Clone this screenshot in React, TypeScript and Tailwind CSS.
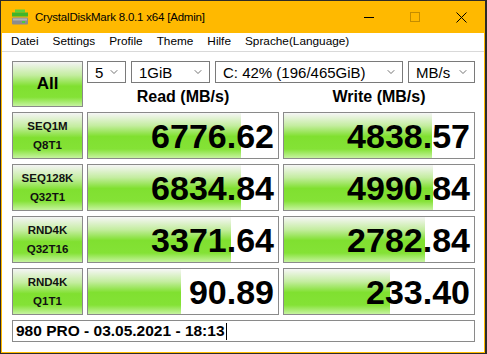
import { ChevronDown } from 'lucide-react';

const rows = [
  { a: 'SEQ1M', b: 'Q8T1', read: '6776.62', write: '4838.57', rw: 153, ww: 148 },
  { a: 'SEQ128K', b: 'Q32T1', read: '6834.84', write: '4990.84', rw: 153, ww: 149 },
  { a: 'RND4K', b: 'Q32T16', read: '3371.64', write: '2782.84', rw: 143, ww: 141 },
  { a: 'RND4K', b: 'Q1T1', read: '90.89', write: '233.40', rw: 93, ww: 106 },
];

const font = { fontFamily: '"Liberation Sans", Arial, sans-serif' };

function Select({ w, text }: { w: string; text: string }) {
  return (
    <div className={`${w} h-[22px] bg-white border border-[#7a7a7a] flex items-center justify-between pl-[7px] pr-[5px]`}>
      <span className="text-[15px] leading-none text-black">{text}</span>
      <ChevronDown size={12} strokeWidth={1.5} className="text-[#444]" />
    </div>
  );
}

function Cell({ value, fill }: { value: string; fill: number }) {
  return (
    <div className="relative h-[47px] bg-white border border-[#8a8a8a] overflow-hidden">
      <div
        className="absolute left-0 top-0 bottom-0 bg-[linear-gradient(to_bottom,#f6f6f6_0%,#c4eda0_28%,#80e030_52%,#84e236_80%,#c6f3a0_100%)]"
        style={{ width: fill }}
      />
      <div className="relative h-full flex items-center justify-end pr-[4px] pt-[1px]">
        <span className="text-[34px] font-bold leading-none text-black">{value}</span>
      </div>
    </div>
  );
}

export default function App() {
  return (
    <div className="w-[487px] h-[354px] bg-[#2e2b28] pt-[1px] pl-[1px] overflow-hidden" style={font}>
      <div className="w-[484px] h-[352px] border border-[#ffb900] border-t-0 flex flex-col bg-white">
        {/* Title bar */}
        <div className="h-[32px] bg-[#ffb900] flex items-center pl-[9px]">
          <svg width="18" height="16" viewBox="0 0 18 16" className="mr-[6px]">
            <rect x="4" y="0.5" width="10" height="3" fill="#5fcf3a" />
            <rect x="1" y="3.5" width="16" height="4" fill="#3fb52a" />
            <rect x="1" y="8.5" width="16" height="7" rx="1" fill="#8c8c8c" />
            <rect x="2" y="9.5" width="14" height="2" fill="#b4b4b4" />
            <rect x="11" y="12" width="3" height="2" fill="#4ccc3a" />
          </svg>
          <span className="text-[11.5px] tracking-[-0.2px] text-black pt-[1px]">CrystalDiskMark 8.0.1 x64 [Admin]</span>
          <div className="ml-auto flex items-center h-full">
            <div className="w-[46px] h-full flex items-center justify-center">
              <div className="w-[10px] h-px bg-black" />
            </div>
            <div className="w-[46px] h-full flex items-center justify-center">
              <div className="w-[10px] h-[10px] border border-[#c48d00]" />
            </div>
            <div className="w-[46px] h-full flex items-center justify-center">
              <svg width="11" height="11" viewBox="0 0 11 11">
                <path d="M0.5 0.5 L10.5 10.5 M10.5 0.5 L0.5 10.5" stroke="#000" strokeWidth="1" />
              </svg>
            </div>
          </div>
        </div>

        {/* Menu */}
        <div className="h-[19px] bg-white flex items-center pl-[9px] gap-[14px] text-[11.8px] text-black border-b border-[#d9d9d9]">
          <span>Datei</span>
          <span>Settings</span>
          <span>Profile</span>
          <span>Theme</span>
          <span>Hilfe</span>
          <span>Sprache(Language)</span>
        </div>

        {/* Body */}
        <div className="flex-1 bg-white pt-[9px] pl-[10px] pr-[7px] flex flex-col gap-[5px]">
          <div className="flex gap-[4px]">
            <div className="w-[71px] h-[46px] border border-[#8a8a8a] bg-[linear-gradient(to_bottom,#f4f4f4_0%,#c4eda0_30%,#80e030_55%,#84e236_80%,#c6f3a0_100%)] flex items-center justify-center">
              <span className="text-[17px] font-bold text-black">All</span>
            </div>
            <div className="flex flex-col w-[388px]">
              <div className="flex gap-[5px]">
                <Select w="w-[39px]" text="5" />
                <Select w="w-[79px]" text="1GiB" />
                <Select w="w-[188px]" text="C: 42% (196/465GiB)" />
                <Select w="w-[67px]" text="MB/s" />
              </div>
              <div className="flex gap-[4px] flex-1 items-end">
                <div className="w-[192px] text-center text-[16px] font-bold leading-[20px] text-black">Read (MB/s)</div>
                <div className="w-[192px] text-center text-[16px] font-bold leading-[20px] text-black">Write (MB/s)</div>
              </div>
            </div>
          </div>

          {rows.map((r, i) => (
            <div key={i} className="grid grid-cols-[71px_192px_192px] gap-x-[4px]">
              <div className="h-[47px] border border-[#8a8a8a] bg-[linear-gradient(to_bottom,#f4f4f4_0%,#c4eda0_30%,#80e030_55%,#84e236_80%,#c6f3a0_100%)] flex flex-col items-center justify-center">
                <span className="text-[11.5px] font-bold leading-[19px] text-[#111]">{r.a}</span>
                <span className="text-[11.5px] font-bold leading-[19px] text-[#111]">{r.b}</span>
              </div>
              <Cell value={r.read} fill={r.rw} />
              <Cell value={r.write} fill={r.ww} />
            </div>
          ))}

          <div className="w-[463px] h-[22px] bg-white border border-[#8a8a8a] flex items-center pl-[3px]">
            <span className="text-[15.5px] font-bold leading-none text-black">980 PRO - 03.05.2021 - 18:13</span>
            <span className="w-px h-[17px] bg-black ml-[1px]" />
          </div>
        </div>
      </div>
    </div>
  );
}
